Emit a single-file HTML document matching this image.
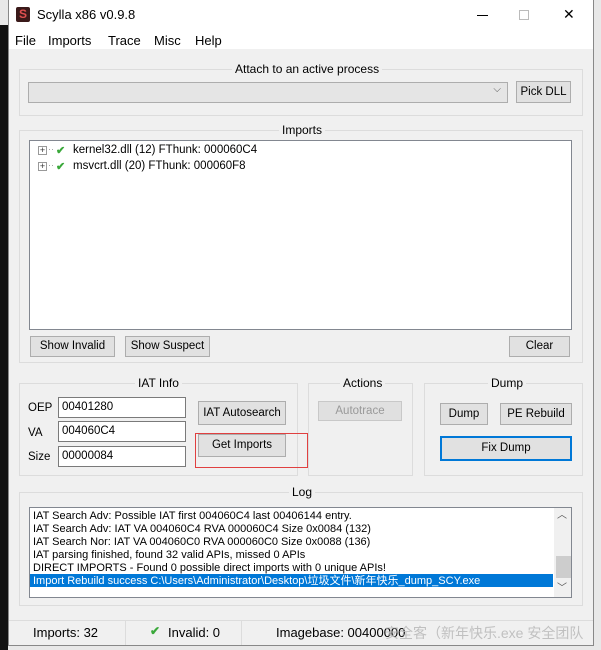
<!DOCTYPE html>
<html><head><meta charset="utf-8"><style>
*{box-sizing:border-box;margin:0;padding:0}
body{width:601px;height:650px;position:relative;background:#e8e8e8;overflow:hidden;font-family:"Liberation Sans","Noto Sans CJK SC",sans-serif;font-size:11px;color:#000}
.a{position:absolute}
.grp{position:absolute;border:1px solid #dcdcdc}
.gt{position:absolute;top:-8px;background:#f0f0f0;padding:0 3px;font-size:12px;white-space:nowrap}
.btn{position:absolute;background:#e1e1e1;border:1px solid #adadad;text-align:center;font-size:11.5px;line-height:19px}
.ed{position:absolute;background:#fff;border:1px solid #7a7a7a;padding-left:3px;line-height:19px;font-size:11.5px}
.log div{height:13px;line-height:14px;white-space:nowrap;padding-left:3px}
.m{position:absolute;top:33px;font-size:13px}
</style></head><body>
<div class="a" style="left:0;top:25px;width:8px;height:625px;background:#111"></div>
<div class="a" style="left:8px;top:0;width:586px;height:646px;background:#f0f0f0;border:1px solid #888"></div>
<div class="a" style="left:9px;top:0;width:584px;height:49px;background:#fff"></div>
<div class="a" style="left:16px;top:7px;width:14px;height:15px;background:#3a1a1a;border-radius:2px;color:#e05050;font-weight:bold;font-size:12px;text-align:center;line-height:15px">S</div>
<div class="a" style="left:37px;top:7px;font-size:13px">Scylla x86 v0.9.8</div>
<div class="a" style="left:477px;top:15px;width:11px;height:1px;background:#000"></div>
<div class="a" style="left:519px;top:10px;width:10px;height:10px;border:1px solid #bbb"></div>
<div class="a" style="left:563px;top:6px;font-size:14px;font-weight:300">✕</div>
<span class="m" style="left:15px">File</span><span class="m" style="left:48px">Imports</span><span class="m" style="left:108px">Trace</span><span class="m" style="left:154px">Misc</span><span class="m" style="left:195px">Help</span>

<div class="grp" style="left:19px;top:69px;width:564px;height:47px"><span class="gt" style="left:212px">Attach to an active process</span></div>
<div class="a" style="left:28px;top:82px;width:480px;height:21px;background:#e5e5e5;border:1px solid #adadad"><span class="a" style="right:6px;top:1px;font-size:10px;color:#555">⌵</span></div>
<div class="btn" style="left:516px;top:81px;width:55px;height:22px;line-height:20px">Pick DLL</div>

<div class="grp" style="left:19px;top:130px;width:564px;height:233px"><span class="gt" style="left:259px">Imports</span></div>
<div class="a" style="left:29px;top:140px;width:543px;height:190px;background:#fff;border:1px solid #828790"></div>
<div class="a" style="left:38px;top:146px;width:9px;height:9px;border:1px solid #999;font-size:9px;line-height:7px;text-align:center;color:#333">+</div>
<div class="a" style="left:38px;top:162px;width:9px;height:9px;border:1px solid #999;font-size:9px;line-height:7px;text-align:center;color:#333">+</div>
<div class="a" style="left:48px;top:144px;color:#999;font-size:9px">··</div>
<div class="a" style="left:48px;top:160px;color:#999;font-size:9px">··</div>
<div class="a" style="left:56px;top:144px;color:#3aa83a;font-weight:bold">✔</div>
<div class="a" style="left:56px;top:160px;color:#3aa83a;font-weight:bold">✔</div>
<div class="a" style="left:73px;top:144px;font-size:11.5px">kernel32.dll (12) FThunk: 000060C4</div>
<div class="a" style="left:73px;top:160px;font-size:11.5px">msvcrt.dll (20) FThunk: 000060F8</div>
<div class="btn" style="left:30px;top:336px;width:85px;height:21px">Show Invalid</div>
<div class="btn" style="left:125px;top:336px;width:85px;height:21px">Show Suspect</div>
<div class="btn" style="left:509px;top:336px;width:61px;height:21px">Clear</div>

<div class="grp" style="left:19px;top:383px;width:279px;height:93px"><span class="gt" style="left:115px">IAT Info</span></div>
<div class="a" style="left:28px;top:402px;font-size:11.5px">OEP</div>
<div class="a" style="left:28px;top:427px;font-size:11.5px">VA</div>
<div class="a" style="left:28px;top:451px;font-size:11.5px">Size</div>
<div class="ed" style="left:58px;top:397px;width:128px;height:21px">00401280</div>
<div class="ed" style="left:58px;top:421px;width:128px;height:21px">004060C4</div>
<div class="ed" style="left:58px;top:446px;width:128px;height:21px">00000084</div>
<div class="btn" style="left:198px;top:401px;width:88px;height:24px;line-height:22px">IAT Autosearch</div>
<div class="btn" style="left:198px;top:434px;width:88px;height:23px;line-height:21px">Get Imports</div>
<div class="a" style="left:195px;top:433px;width:113px;height:35px;border:1px solid #e04040"></div>

<div class="grp" style="left:308px;top:383px;width:105px;height:93px"><span class="gt" style="left:31px">Actions</span></div>
<div class="btn" style="left:318px;top:401px;width:84px;height:20px;color:#999;border-color:#c8c8c8;background:#e0e0e0">Autotrace</div>

<div class="grp" style="left:424px;top:383px;width:159px;height:93px"><span class="gt" style="left:63px">Dump</span></div>
<div class="btn" style="left:440px;top:403px;width:48px;height:22px;line-height:20px">Dump</div>
<div class="btn" style="left:500px;top:403px;width:72px;height:22px;line-height:20px">PE Rebuild</div>
<div class="btn" style="left:440px;top:436px;width:132px;height:25px;border:2px solid #0078d7;line-height:21px">Fix Dump</div>

<div class="grp" style="left:19px;top:492px;width:564px;height:114px"><span class="gt" style="left:269px">Log</span></div>
<div class="a log" style="left:29px;top:507px;width:543px;height:91px;background:#fff;border:1px solid #828790;padding-top:1px">
<div>IAT Search Adv: Possible IAT first 004060C4 last 00406144 entry.</div>
<div>IAT Search Adv: IAT VA 004060C4 RVA 000060C4 Size 0x0084 (132)</div>
<div>IAT Search Nor: IAT VA 004060C0 RVA 000060C0 Size 0x0088 (136)</div>
<div>IAT parsing finished, found 32 valid APIs, missed 0 APIs</div>
<div>DIRECT IMPORTS - Found 0 possible direct imports with 0 unique APIs!</div>
<div style="background:#0078d7;color:#fff;width:523px">Import Rebuild success C:\Users\Administrator\Desktop\垃圾文件\新年快乐_dump_SCY.exe</div>
<div class="a" style="left:524px;top:0;width:17px;height:89px;background:#f0f0f0"></div>
<div class="a" style="left:527px;top:1px;font-size:10px;color:#555;padding:0">︿</div>
<div class="a" style="left:526px;top:48px;width:15px;height:22px;background:#cdcdcd;padding:0"></div>
<div class="a" style="left:527px;top:74px;font-size:10px;color:#555;padding:0">﹀</div>
</div>

<div class="a" style="left:9px;top:620px;width:584px;height:1px;background:#dcdcdc"></div>
<div class="a" style="left:125px;top:621px;width:1px;height:24px;background:#dcdcdc"></div>
<div class="a" style="left:241px;top:621px;width:1px;height:24px;background:#dcdcdc"></div>
<div class="a" style="left:33px;top:625px;font-size:13px">Imports: 32</div>
<div class="a" style="left:150px;top:624px;color:#3aa83a;font-weight:bold;font-size:12px">✔</div>
<div class="a" style="left:168px;top:625px;font-size:13px">Invalid: 0</div>
<div class="a" style="left:276px;top:625px;font-size:13px">Imagebase: 00400000</div>
<div class="a" style="left:385px;top:623px;font-size:14px;color:#bbb;opacity:.9">安全客（新年快乐.exe 安全团队</div>
</body></html>
